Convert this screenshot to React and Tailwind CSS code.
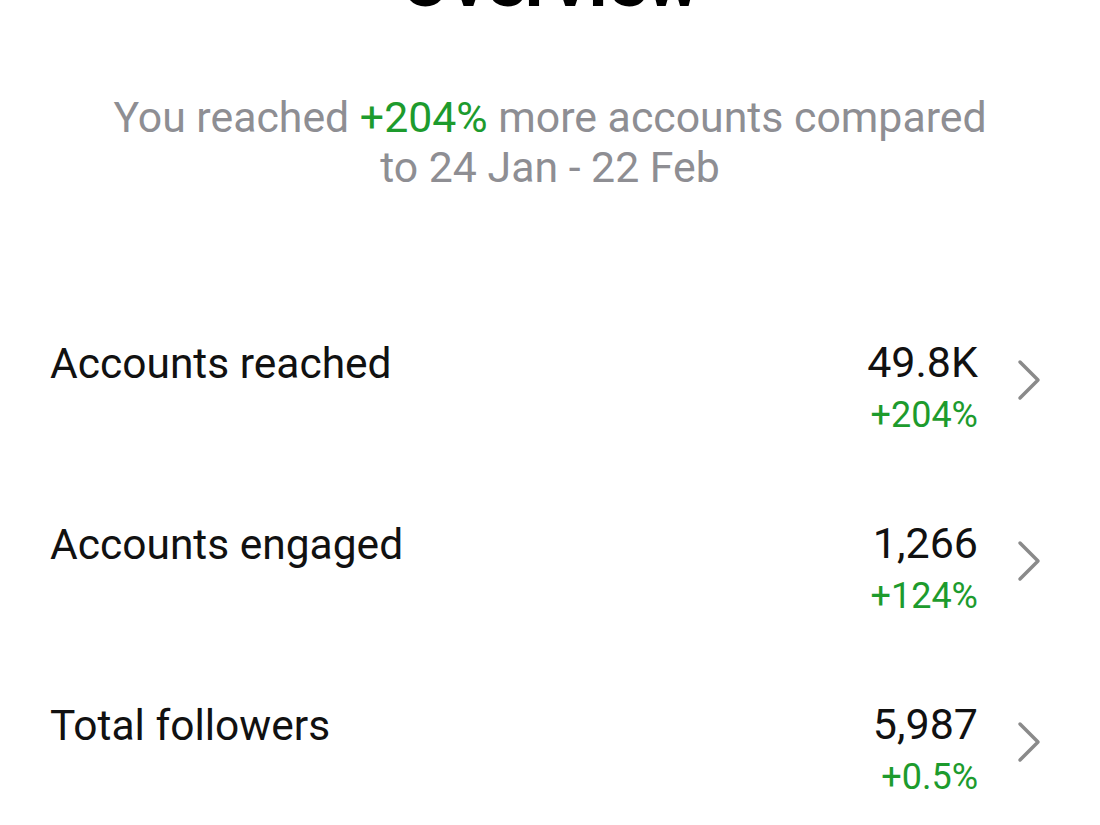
import React from "react";

const rows = [
  { label: "Accounts reached", value: "49.8K", delta: "+204%" },
  { label: "Accounts engaged", value: "1,266", delta: "+124%" },
  { label: "Total followers", value: "5,987", delta: "+0.5%" },
];

function Chevron() {
  return (
    <svg width="26" height="42" viewBox="0 0 26 42" fill="none" className="shrink-0">
      <path d="M4 3 L22 21 L4 39" stroke="#8a8a8a" strokeWidth="3.5" strokeLinecap="round" strokeLinejoin="round" />
    </svg>
  );
}

export default function App() {
  return (
    <div className="w-[1100px] h-[825px] overflow-hidden bg-white" style={{ fontFamily: "Roboto, 'Noto Sans', sans-serif" }}>
      <div className="mt-[-54px] text-center text-[72px] leading-[72px] font-bold text-black">Overview</div>
      <div className="mt-[74px] text-center text-[42.8px] leading-[50px] text-[#8e8e93]">
        You reached <span className="text-[#1d9b2d]">+204%</span> more accounts compared
        <br />
        to 24 Jan - 22 Feb
      </div>
      <div className="mt-[157px] flex flex-col gap-[80px] pl-[50px] pr-[58px]">
        {rows.map((r) => (
          <div key={r.label} className="flex items-start h-[101px]">
            <div className="flex-1 text-[42.5px] leading-[50px] text-[#111] mt-[-10px]">{r.label}</div>
            <div className="flex flex-col items-end mt-[-12px]">
              <div className="text-[43px] leading-[50px] text-[#111]">{r.value}</div>
              <div className="text-[36px] leading-[50px] mt-[3px] text-[#1d9b2d]">{r.delta}</div>
            </div>
            <div className="ml-[38px] mt-[10px]">
              <Chevron />
            </div>
          </div>
        ))}
      </div>
    </div>
  );
}
